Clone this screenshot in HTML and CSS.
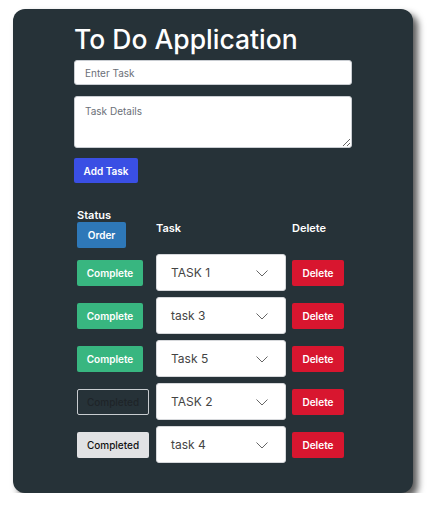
FILE: index.html
```html
<!DOCTYPE html>
<html>
<head>
<meta charset="utf-8">
<link rel="stylesheet" href="styles.css">
</head>
<body>
<div class="card">
  <h1 class="title">To Do Application</h1>
  <input class="field" type="text" placeholder="Enter Task">
  <textarea class="field area" placeholder="Task Details"></textarea>
  <button class="btn add">Add Task</button>
  <table class="tasks">
    <thead>
      <tr>
        <th class="col-status"><div class="th-label">Status</div><button class="btn order">Order</button></th>
        <th class="col-task">Task</th>
        <th class="col-del">Delete</th>
      </tr>
    </thead>
    <tbody>
      <tr>
        <td><button class="btn complete">Complete</button></td>
        <td><div class="select"><span>TASK 1</span><svg class="chev" viewBox="0 0 12 7" width="12" height="7"><path d="M0.5 0.5 L6 6 L11.5 0.5" fill="none" stroke="#666" stroke-width="1"/></svg></div></td>
        <td><button class="btn del">Delete</button></td>
      </tr>
      <tr>
        <td><button class="btn complete">Complete</button></td>
        <td><div class="select"><span>task 3</span><svg class="chev" viewBox="0 0 12 7" width="12" height="7"><path d="M0.5 0.5 L6 6 L11.5 0.5" fill="none" stroke="#666" stroke-width="1"/></svg></div></td>
        <td><button class="btn del">Delete</button></td>
      </tr>
      <tr>
        <td><button class="btn complete">Complete</button></td>
        <td><div class="select"><span>Task 5</span><svg class="chev" viewBox="0 0 12 7" width="12" height="7"><path d="M0.5 0.5 L6 6 L11.5 0.5" fill="none" stroke="#666" stroke-width="1"/></svg></div></td>
        <td><button class="btn del">Delete</button></td>
      </tr>
      <tr>
        <td><button class="btn done-outline">Completed</button></td>
        <td><div class="select"><span>TASK 2</span><svg class="chev" viewBox="0 0 12 7" width="12" height="7"><path d="M0.5 0.5 L6 6 L11.5 0.5" fill="none" stroke="#666" stroke-width="1"/></svg></div></td>
        <td><button class="btn del">Delete</button></td>
      </tr>
      <tr>
        <td><button class="btn done">Completed</button></td>
        <td><div class="select"><span>task 4</span><svg class="chev" viewBox="0 0 12 7" width="12" height="7"><path d="M0.5 0.5 L6 6 L11.5 0.5" fill="none" stroke="#666" stroke-width="1"/></svg></div></td>
        <td><button class="btn del">Delete</button></td>
      </tr>
    </tbody>
  </table>
</div>
</body>
</html>
```
FILE: styles.css
```css
* { box-sizing: border-box; }
html, body { margin: 0; padding: 0; background: #fff; }
body { font-family: Inter, "Noto Sans", sans-serif; }

.card {
  margin: 9px 0 0 13px;
  width: 400px;
  height: 484px;
  background: #263238;
  border-radius: 12px;
  box-shadow: 5px 5px 7px rgba(0,0,0,0.65);
  padding: 15px 0 0 61px;
  display: flex;
  flex-direction: column;
  align-items: flex-start;
}

.title {
  margin: 0;
  font-size: 26.5px;
  font-weight: 500;
  color: #fff;
  line-height: 30px;
  height: 36px;
}

.field {
  display: block;
  width: 278px;
  height: 25px;
  border: 1px solid #c9cdd2;
  border-radius: 3px;
  background: #fff;
  padding: 0 10px;
  font-family: Inter, sans-serif;
  font-size: 10px;
  color: #333;
  outline: none;
}
.field::placeholder { color: #6b7078; }
.area {
  margin-top: 11px;
  height: 52px;
  padding-top: 8px;
  resize: vertical;
}

.btn {
  border: none;
  border-radius: 2px;
  font-family: Inter, sans-serif;
  font-size: 10px;
  font-weight: 600;
  color: #fff;
  padding: 0;
  cursor: pointer;
}
.add {
  margin-top: 10px;
  width: 64px;
  height: 25px;
  background: #3a4fe4;
}

.tasks {
  margin-top: 22px;
  border-collapse: collapse;
}
.tasks th, .tasks td {
  padding: 3px;
  vertical-align: middle;
  text-align: left;
}
.tasks th {
  color: #fff;
  font-size: 11px;
  font-weight: 600;
}
.col-status { width: 79px; }
.th-label { line-height: 14px; }
.order {
  width: 49px;
  height: 26px;
  background: #2e78b8;
}
.select {
  width: 130px;
  height: 37px;
  background: #fff;
  border: 1px solid #d6d8db;
  border-radius: 3px;
  display: flex;
  align-items: center;
  justify-content: space-between;
  padding: 0 17px 0 14px;
  font-size: 12px;
  color: #444;
}
.chev { margin-top: 2px; }
.complete {
  width: 66px;
  height: 26px;
  background: #38b680;
}
.done-outline {
  width: 72px;
  height: 26px;
  background: transparent;
  border: 1px solid #c8ccd0;
  color: #1e2428;
  font-weight: 500;
}
.done {
  width: 72px;
  height: 26px;
  background: #e1e2e4;
  color: #111;
  font-weight: 500;
}
.del {
  width: 52px;
  height: 26px;
  background: #d8162f;
}
```
